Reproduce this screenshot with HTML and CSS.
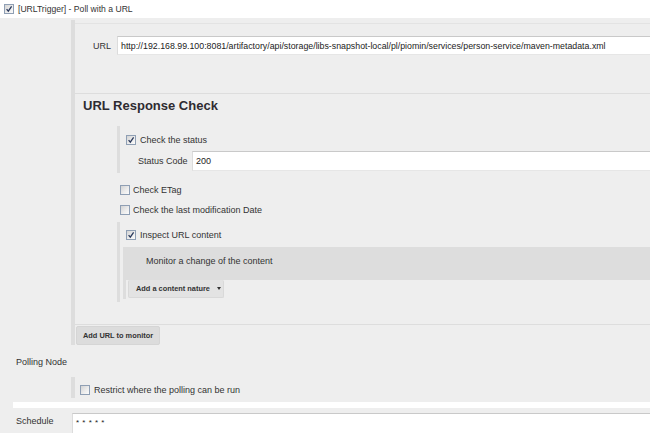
FILE: index.html
```html
<!DOCTYPE html>
<html>
<head>
<meta charset="utf-8">
<link rel="stylesheet" href="styles.css">
</head>
<body>
<div class="header">
  <span class="cb checked"><svg viewBox="0 0 8 8"><path d="M1.6 4.2 L3.3 6.2 L6.6 1.4"/></svg></span>
  <span class="header-text">[URLTrigger] - Poll with a URL</span>
</div>

<div class="trigger">
  <div class="panel">
    <div class="url-row">
      <span class="url-label">URL</span>
      <div class="field url-field">http://192.168.99.100:8081/artifactory/api/storage/libs-snapshot-local/pl/piomin/services/person-service/maven-metadata.xml</div>
    </div>
    <div class="sep"></div>
    <div class="heading">URL Response Check</div>

    <div class="group status-group">
      <div class="cbrow first">
        <span class="cb checked"><svg viewBox="0 0 8 8"><path d="M1.6 4.2 L3.3 6.2 L6.6 1.4"/></svg></span>
        <span>Check the status</span>
      </div>
      <div class="status-row">
        <span class="status-label">Status Code</span>
        <div class="field">200</div>
      </div>
    </div>

    <div class="plain-row etag">
      <span class="cb"></span>
      <span>Check ETag</span>
    </div>
    <div class="plain-row">
      <span class="cb"></span>
      <span>Check the last modification Date</span>
    </div>

    <div class="group inspect-group">
      <div class="cbrow">
        <span class="cb checked"><svg viewBox="0 0 8 8"><path d="M1.6 4.2 L3.3 6.2 L6.6 1.4"/></svg></span>
        <span>Inspect URL content</span>
      </div>
      <div class="subgroup">
        <div class="content-box">Monitor a change of the content</div>
        <div class="btn nature-btn">Add a content nature <span class="caret"></span></div>
      </div>
    </div>

    <div class="sep2"></div>
    <div class="btn add-btn">Add URL to monitor</div>
  </div>
</div>

<div class="polling">Polling Node</div>
<div class="restrict">
  <span class="cb"></span>
  <span>Restrict where the polling can be run</span>
</div>

<div class="white-strip"></div>
<div class="schedule-row">
  <span class="schedule-label">Schedule</span>
  <div class="field schedule-field">* * * * *</div>
</div>
</body>
</html>
```

FILE: styles.css
```css
* { box-sizing: border-box; }
html, body { margin: 0; padding: 0; }
body {
  background: #eeeeee;
  font-family: "Liberation Sans", Arial, sans-serif;
  font-size: 9px;
  color: #333333;
  width: 650px;
  height: 433px;
  overflow: hidden;
}

/* checkbox */
.cb {
  display: inline-flex;
  align-items: center;
  justify-content: center;
  width: 10px;
  height: 10px;
  flex: none;
  border: 1px solid #8f9fb4;
  background: linear-gradient(135deg, #d3d3d3 0%, #ececec 55%, #fbfbfb 100%);
}
.cb svg { width: 8px; height: 8px; }
.cb svg path { fill: none; stroke: #2b3a5c; stroke-width: 1.3; }

.header {
  background: #ffffff;
  height: 18px;
  display: flex;
  align-items: center;
  padding-left: 4px;
  gap: 4px;
}
.header-text { font-size: 8.6px; }

.trigger {
  margin: 2px 0 0 71px;
  border-left: 4px solid #dddddd;
  padding-top: 3px;
}
.panel { border-top: 1px solid #e3e3e3; }

.url-row {
  display: flex;
  align-items: center;
  margin-top: 12px;
  height: 19px;
}
.url-label { width: 42px; padding-left: 18px; flex: none; }

.field {
  flex: 1;
  height: 19px;
  background: #ffffff;
  border-top: 1px solid #c9c9c9;
  border-left: 1px solid #dcdcdc;
  border-bottom: 1px solid #e6e6e6;
  padding-left: 3px;
  display: flex;
  align-items: center;
  margin-right: -4px;
  white-space: nowrap;
  overflow: hidden;
  color: #222222;
}
.url-field { font-size: 8.8px; }

.sep { border-top: 1px solid #dddddd; margin-top: 38px; }
.heading {
  font-size: 13px;
  font-weight: bold;
  line-height: 16px;
  padding: 4px 0 0 8px;
  color: #2e2b31;
}

.group {
  margin-left: 42px;
  border-left: 3px solid #dddddd;
}
.status-group { margin-top: 12px; padding-top: 4px; padding-bottom: 2px; }
.cbrow {
  display: flex;
  align-items: center;
  gap: 4px;
  height: 20px;
  padding-left: 6px;
}
.status-row {
  display: flex;
  align-items: center;
  margin-top: 1px;
  height: 20px;
}
.status-label { width: 72px; padding-left: 18px; flex: none; }
.status-row .field { height: 20px; }

.plain-row {
  display: flex;
  align-items: center;
  gap: 3px;
  height: 20px;
  margin-left: 45px;
}
.etag { margin-top: 7px; }

.inspect-group { margin-top: 2px; padding-top: 3px; padding-bottom: 3px; }
.subgroup {
  margin-top: 2px;
  margin-left: 3px;
  border-left: 3px solid #dddddd;
  padding-bottom: 1px;
}
.content-box {
  background: #dddddd;
  height: 33px;
  padding: 9px 0 0 20px;
  line-height: 11px;
}

.btn {
  display: inline-flex;
  align-items: center;
  font-weight: bold;
  font-size: 7.4px;
  color: #333333;
  border-radius: 2px;
}
.nature-btn {
  margin-left: 2px;
  height: 18px;
  width: 96px;
  padding-left: 7px;
  background: #e3e3e3;
  border: 1px solid #d9d9d9;
  border-top: none;
}
.caret {
  display: inline-block;
  margin-left: 7px;
  width: 0;
  height: 0;
  border-left: 2.5px solid transparent;
  border-right: 2.5px solid transparent;
  border-top: 3px solid #333333;
}

.sep2 { border-top: 1px solid #dddddd; margin-top: 22px; }
.add-btn {
  margin: 1px 0 0 1px;
  height: 19px;
  padding: 0 6px;
  background: #dcdcdc;
  border: 1px solid #d5d5d5;
}

.polling {
  height: 32px;
  padding: 2px 0 0 16px;
  display: flex;
  align-items: center;
}
.restrict {
  margin-left: 71px;
  border-left: 4px solid #dddddd;
  height: 21px;
  padding: 4px 0 0 5px;
  display: flex;
  align-items: center;
  gap: 4px;
}

.white-strip {
  margin: 4px 0 0 13px;
  height: 6px;
  background: #ffffff;
}
.schedule-row {
  display: flex;
  padding-top: 5px;
}
.schedule-label {
  width: 72px;
  padding: 0 0 0 16px;
  line-height: 16px;
  flex: none;
}
.schedule-field {
  height: 24px;
  align-items: flex-start;
  padding-top: 4px;
  font-size: 8px;
  letter-spacing: 0.5px;
}
```
